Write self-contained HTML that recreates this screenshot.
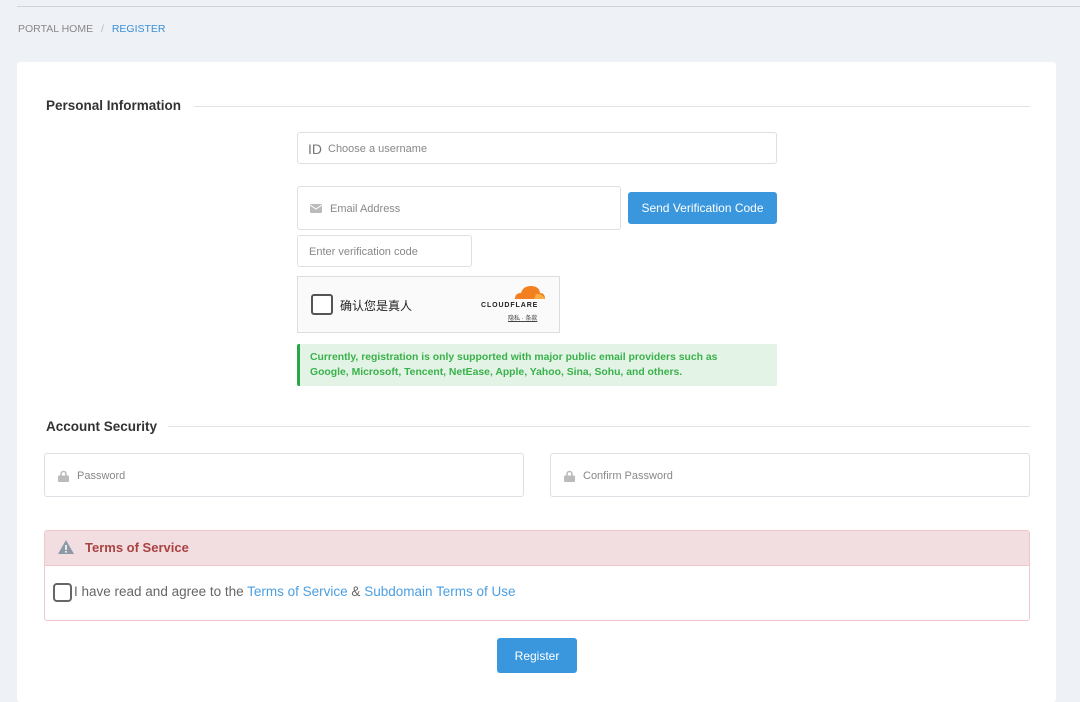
<!DOCTYPE html>
<html><head><meta charset="utf-8"><style>
*{box-sizing:border-box;margin:0;padding:0}
body{width:1080px;height:693px;overflow:hidden;background:#eef1f5;font-family:"Liberation Sans","Noto Sans CJK SC",sans-serif;position:relative;color:#333}
.a{position:absolute}
.topline{left:17px;right:0;top:6px;height:1px;background:#cfd3d7}
.bc{left:18px;top:23px;font-size:10.5px;color:#888}
.bc span{color:#3a8fd6}
.card{left:17px;top:62px;width:1039px;height:640px;background:#fff;border-radius:3px}
.h{font-size:13.5px;font-weight:bold;color:#333}
.hr{height:1px;background:#e2e4e6}
.inp{border:1px solid #dcdfe3;border-radius:3px;background:#fff;font-size:11px;color:#888;display:flex;align-items:center;padding-top:1px}
.btn{background:#3a97dd;color:#fff;border-radius:3px;font-size:12px;display:flex;align-items:center;justify-content:center}
</style></head><body>
<div class="a topline"></div>
<div class="a bc">PORTAL HOME <i style="font-style:normal;color:#bbb;margin:0 5px">/</i> <span>REGISTER</span></div>
<div class="a card"></div>
<div class="a h" style="left:46px;top:98px">Personal Information</div>
<div class="a hr" style="left:194px;top:106px;width:836px"></div>
<div class="a inp" style="left:297px;top:132px;width:480px;height:32px;padding-left:10px"><span style="font-size:14px;color:#777;margin-right:6px">ID</span>Choose a username</div>
<div class="a inp" style="left:297px;top:186px;width:324px;height:44px;padding-left:12px"><svg width="12" height="9" viewBox="0 0 12 9" style="margin-right:8px"><rect width="12" height="9" rx="1" fill="#bbb"/><path d="M0 1 6 5 12 1" stroke="#fff" fill="none"/></svg>Email Address</div>
<div class="a btn" style="left:628px;top:192px;width:149px;height:32px">Send Verification Code</div>
<div class="a inp" style="left:297px;top:235px;width:175px;height:32px;padding-left:11px">Enter verification code</div>
<div class="a" style="left:297px;top:276px;width:263px;height:57px;background:#fafafa;border:1px solid #ddd"></div>
<div class="a" style="left:311px;top:294px;width:22px;height:21px;border:2px solid #555;border-radius:3px;background:#fff"></div>
<div class="a" style="left:340px;top:297px;font-size:12px;color:#222">确认您是真人</div>
<svg class="a" style="left:512px;top:285px" width="34" height="15" viewBox="0 0 34 15"><path d="M3 14 Q3 8 9 8 Q11 1 19 1 Q27 1 28 8 Q33 8 33 14Z" fill="#f38020"/><path d="M24 9 Q30 8 33 14 H22Z" fill="#fbad41"/></svg>
<div class="a" style="left:481px;top:302px;font-size:7px;font-weight:bold;letter-spacing:0.9px;color:#222">CLOUDFLARE</div>
<div class="a" style="left:508px;top:313px;font-size:6px;color:#444;text-decoration:underline">隐私 · 条款</div>
<div class="a" style="left:297px;top:344px;width:480px;height:42px;background:#e3f4e7;border-left:3px solid #28a745;border-radius:2px;padding:6px 10px;font-size:10.4px;font-weight:bold;color:#3ab14a;line-height:15px;white-space:nowrap"><div>Currently, registration is only supported with major public email providers such as</div><div>Google, Microsoft, Tencent, NetEase, Apple, Yahoo, Sina, Sohu, and others.</div></div>
<div class="a h" style="left:46px;top:419px">Account Security</div>
<div class="a hr" style="left:168px;top:426px;width:862px"></div>
<div class="a inp" style="left:44px;top:453px;width:480px;height:44px;padding-left:13px"><svg width="11" height="12" viewBox="0 0 11 12" style="margin-right:8px"><path d="M3 6V4a2.5 2.5 0 0 1 5 0v2" stroke="#bbb" stroke-width="1.6" fill="none"/><rect y="5.5" width="11" height="6.5" rx="1" fill="#bbb"/></svg>Password</div>
<div class="a inp" style="left:550px;top:453px;width:480px;height:44px;padding-left:13px"><svg width="11" height="12" viewBox="0 0 11 12" style="margin-right:8px"><path d="M3 6V4a2.5 2.5 0 0 1 5 0v2" stroke="#bbb" stroke-width="1.6" fill="none"/><rect y="5.5" width="11" height="6.5" rx="1" fill="#bbb"/></svg>Confirm Password</div>
<div class="a" style="left:44px;top:530px;width:986px;height:91px;border:1px solid #efc7cd;border-radius:3px;background:#fff"></div>
<div class="a" style="left:45px;top:531px;width:984px;height:35px;background:#f2dde0;border-bottom:1px solid #efc7cd"></div>
<svg class="a" style="left:57px;top:539px" width="18" height="16" viewBox="0 0 18 16"><path d="M9 1 17 15H1Z" fill="#8d9aa6"/><rect x="8.2" y="6" width="1.6" height="5" fill="#fff"/><rect x="8.2" y="12" width="1.6" height="1.6" fill="#fff"/></svg>
<div class="a" style="left:85px;top:540px;font-size:13px;font-weight:bold;color:#a94442">Terms of Service</div>
<div class="a" style="left:53px;top:583px;width:19px;height:19px;border:2px solid #666;border-radius:4px"></div>
<div class="a" style="left:74px;top:584px;font-size:13.5px;color:#666">I have read and agree to the <span style="color:#4b9ee0">Terms of Service</span> &amp; <span style="color:#4b9ee0">Subdomain Terms of Use</span></div>
<div class="a btn" style="left:497px;top:638px;width:80px;height:35px">Register</div>
</body></html>
